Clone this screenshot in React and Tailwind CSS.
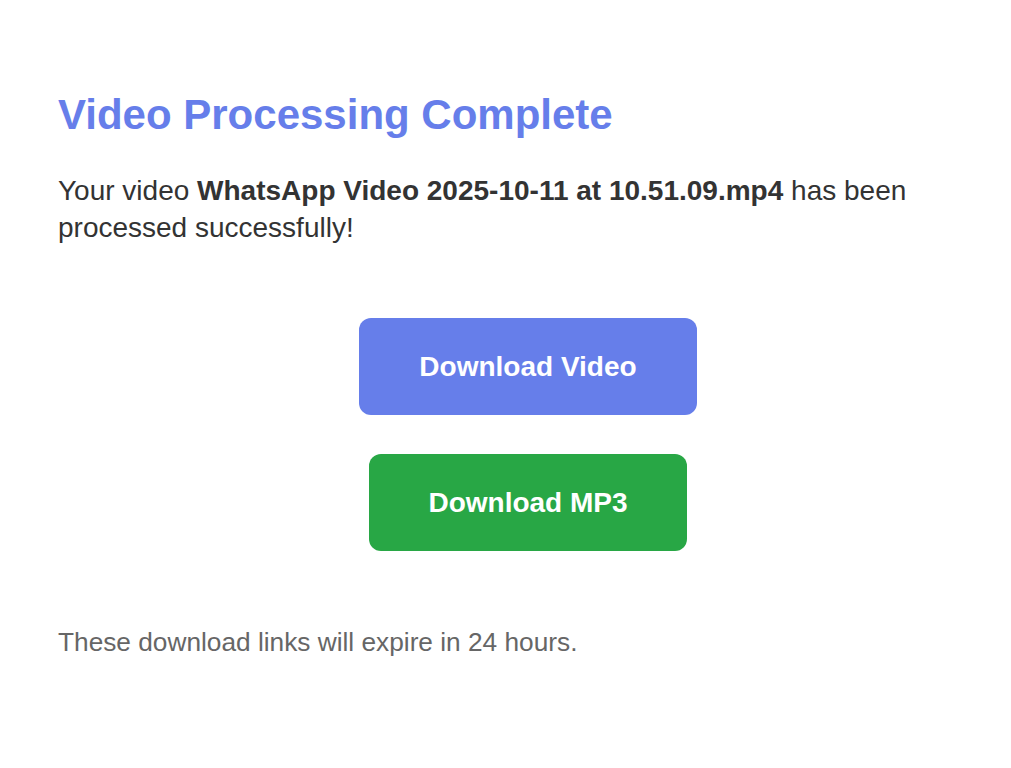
import React from 'react';

export default function App() {
  const fileName = "WhatsApp Video 2025-10-11 at 10.51.09.mp4";

  return (
    <div className="min-h-screen bg-white" style={{ fontFamily: '"Liberation Sans", Arial, Helvetica, sans-serif' }}>
      <div className="pl-[58px] pt-[91px] w-[998px]">
        <h1 className="text-[42px] leading-[48px] font-bold text-[#667eea]">Video Processing Complete</h1>

        <p className="mt-[33px] text-[28px] leading-[37px] text-[#333333]">
          Your video <strong className="font-bold">{fileName}</strong> has been processed successfully!
        </p>

        <div className="mt-[72px] flex flex-col items-center gap-[39px]">
          <a
            href="#"
            className="block rounded-[12px] bg-[#667eea] px-[60px] py-[30px] text-[28px] leading-[37px] font-bold text-white"
          >
            Download Video
          </a>
          <a
            href="#"
            className="block rounded-[12px] bg-[#28a745] px-[59px] py-[30px] text-[28px] leading-[37px] font-bold text-white"
          >
            Download MP3
          </a>
        </div>

        <p className="mt-[74px] text-[26.25px] leading-[34px] text-[#666666]">
          These download links will expire in 24 hours.
        </p>
      </div>
    </div>
  );
}
